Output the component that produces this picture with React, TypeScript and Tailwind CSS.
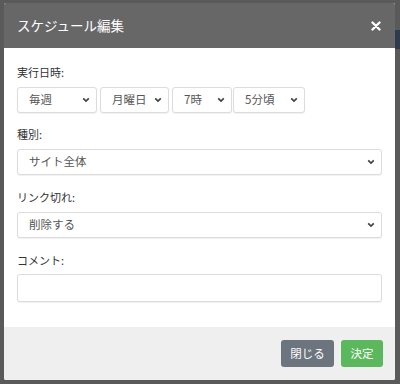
import React from "react";

const Chevron = () => (
  <svg width="8" height="6" viewBox="0 0 8 6" className="shrink-0">
    <path d="M1.2 1.3 L4 4.1 L6.8 1.3" fill="none" stroke="#444" strokeWidth="1.7" />
  </svg>
);

const Sel = ({ text, w, full }: { text: string; w?: string; full?: boolean }) => (
  <div
    className={`h-[26px] flex items-center justify-between pl-[11px] pr-[6px] bg-white border border-[#dcdcdc] rounded-[3px] shadow-[0_1px_1px_rgba(0,0,0,0.06)] text-[11.5px] text-[#555] ${full ? "w-full" : w ?? ""}`}
  >
    <span>{text}</span>
    <Chevron />
  </div>
);

export default function App() {
  return (
    <div
      className="w-[400px] h-[384px] bg-[#5a5a5a] flex overflow-hidden"
      style={{ fontFamily: '"Noto Sans CJK JP", "Noto Sans", sans-serif' }}
    >
      <div className="w-[4px]" />
      <div className="w-[391px] mt-[3px] h-[377px] flex flex-col bg-white rounded-[2px] overflow-hidden">
        <div className="h-[45px] bg-[#676767] flex items-center justify-between pl-[13px] pr-[14px] shrink-0">
          <span className="text-white text-[13.5px]">スケジュール編集</span>
          <svg width="10" height="10" viewBox="0 0 10 10">
            <path d="M1.5 1.5 L8.5 8.5 M8.5 1.5 L1.5 8.5" stroke="#fff" strokeWidth="2.4" strokeLinecap="round" />
          </svg>
        </div>
        <div className="flex-1 px-[13px] pt-[15px]">
          <div className="h-[18px] leading-[18px] text-[11px] text-[#333]">実行日時:</div>
          <div className="flex mt-[6px]">
            <Sel text="毎週" w="w-[80px]" />
            <div className="w-[3px]" />
            <Sel text="月曜日" w="w-[69px]" />
            <div className="w-[3px]" />
            <Sel text="7時" w="w-[60px]" />
            <div className="w-[1px]" />
            <Sel text="5分頃" w="w-[72px]" />
          </div>
          <div className="h-[18px] leading-[18px] text-[11px] text-[#333] mt-[12px]">種別:</div>
          <div className="mt-[6px]">
            <Sel text="サイト全体" full />
          </div>
          <div className="h-[18px] leading-[18px] text-[11px] text-[#333] mt-[13px]">リンク切れ:</div>
          <div className="mt-[6px]">
            <Sel text="削除する" full />
          </div>
          <div className="h-[18px] leading-[18px] text-[11px] text-[#333] mt-[13px]">コメント:</div>
          <div className="mt-[5px] h-[28px] bg-white border border-[#dcdcdc] rounded-[3px] shadow-[0_1px_1px_rgba(0,0,0,0.06)]" />
        </div>
        <div className="h-[53px] bg-[#efefef] flex items-center justify-end gap-[7px] pr-[12px] shrink-0">
          <div className="h-[27px] w-[53px] rounded-[3px] bg-[#6c757d] text-white text-[11.5px] flex items-center justify-center">閉じる</div>
          <div className="h-[27px] w-[42px] rounded-[3px] bg-[#5cb85c] text-white text-[11.5px] flex items-center justify-center">決定</div>
        </div>
      </div>
      <div className="flex-1 flex flex-col">
        <div className="h-[30px]" />
        <div className="h-[19px] bg-[#2d3b4e]" />
      </div>
    </div>
  );
}
